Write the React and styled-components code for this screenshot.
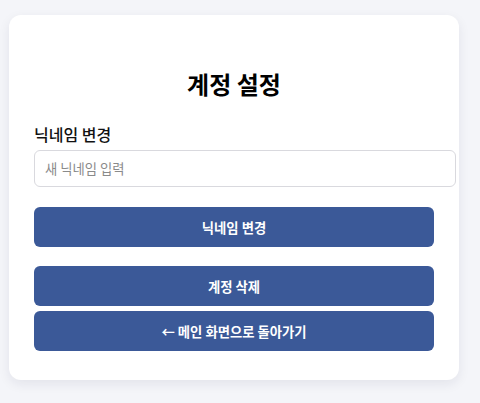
import React from "react";
import styled, { createGlobalStyle } from "styled-components";

const Global = createGlobalStyle`
  html, body {
    margin: 0;
    padding: 0;
    background: #f4f5f9;
    font-family: "Noto Sans CJK KR", "Noto Sans", sans-serif;
  }
`;

const Page = styled.div`
  padding: 15px 0 23px 9px;
`;

const Card = styled.div`
  width: 400px;
  padding: 25px 25px 29px;
  background: #ffffff;
  border-radius: 12px;
  box-shadow: 0 4px 12px rgba(20, 30, 60, 0.08);
  display: flex;
  flex-direction: column;
`;

const Title = styled.h2`
  margin: 28px 0 23px;
  font-size: 24px;
  line-height: 32px;
  font-weight: 700;
  color: #000;
  text-align: center;
`;

const Label = styled.label`
  display: block;
  font-size: 16px;
  line-height: 22px;
  font-weight: 500;
  color: #111;
  margin-bottom: 5px;
`;

const Input = styled.input`
  box-sizing: border-box;
  width: 422px;
  height: 37px;
  padding: 0 10px;
  border: 1px solid #d9d9de;
  border-radius: 6px;
  font-family: inherit;
  font-size: 13.333px;
  color: #222;
  outline: none;
  &::placeholder {
    color: #8a8a8a;
  }
`;

const Button = styled.button`
  box-sizing: border-box;
  width: 400px;
  height: 40px;
  margin-top: ${(p) => p.$gap}px;
  border: none;
  border-radius: 6px;
  background: #3b5998;
  color: #fff;
  font-family: inherit;
  font-size: 13.333px;
  font-weight: 700;
  display: flex;
  align-items: center;
  justify-content: center;
  cursor: pointer;
  padding: 0;
`;

export default function App() {
  return (
    <>
      <Global />
      <Page>
        <Card>
          <Title>계정 설정</Title>
          <Label>닉네임 변경</Label>
          <Input placeholder="새 닉네임 입력" />
          <Button $gap={20}>닉네임 변경</Button>
          <Button $gap={19}>계정 삭제</Button>
          <Button $gap={5}>← 메인 화면으로 돌아가기</Button>
        </Card>
      </Page>
    </>
  );
}
